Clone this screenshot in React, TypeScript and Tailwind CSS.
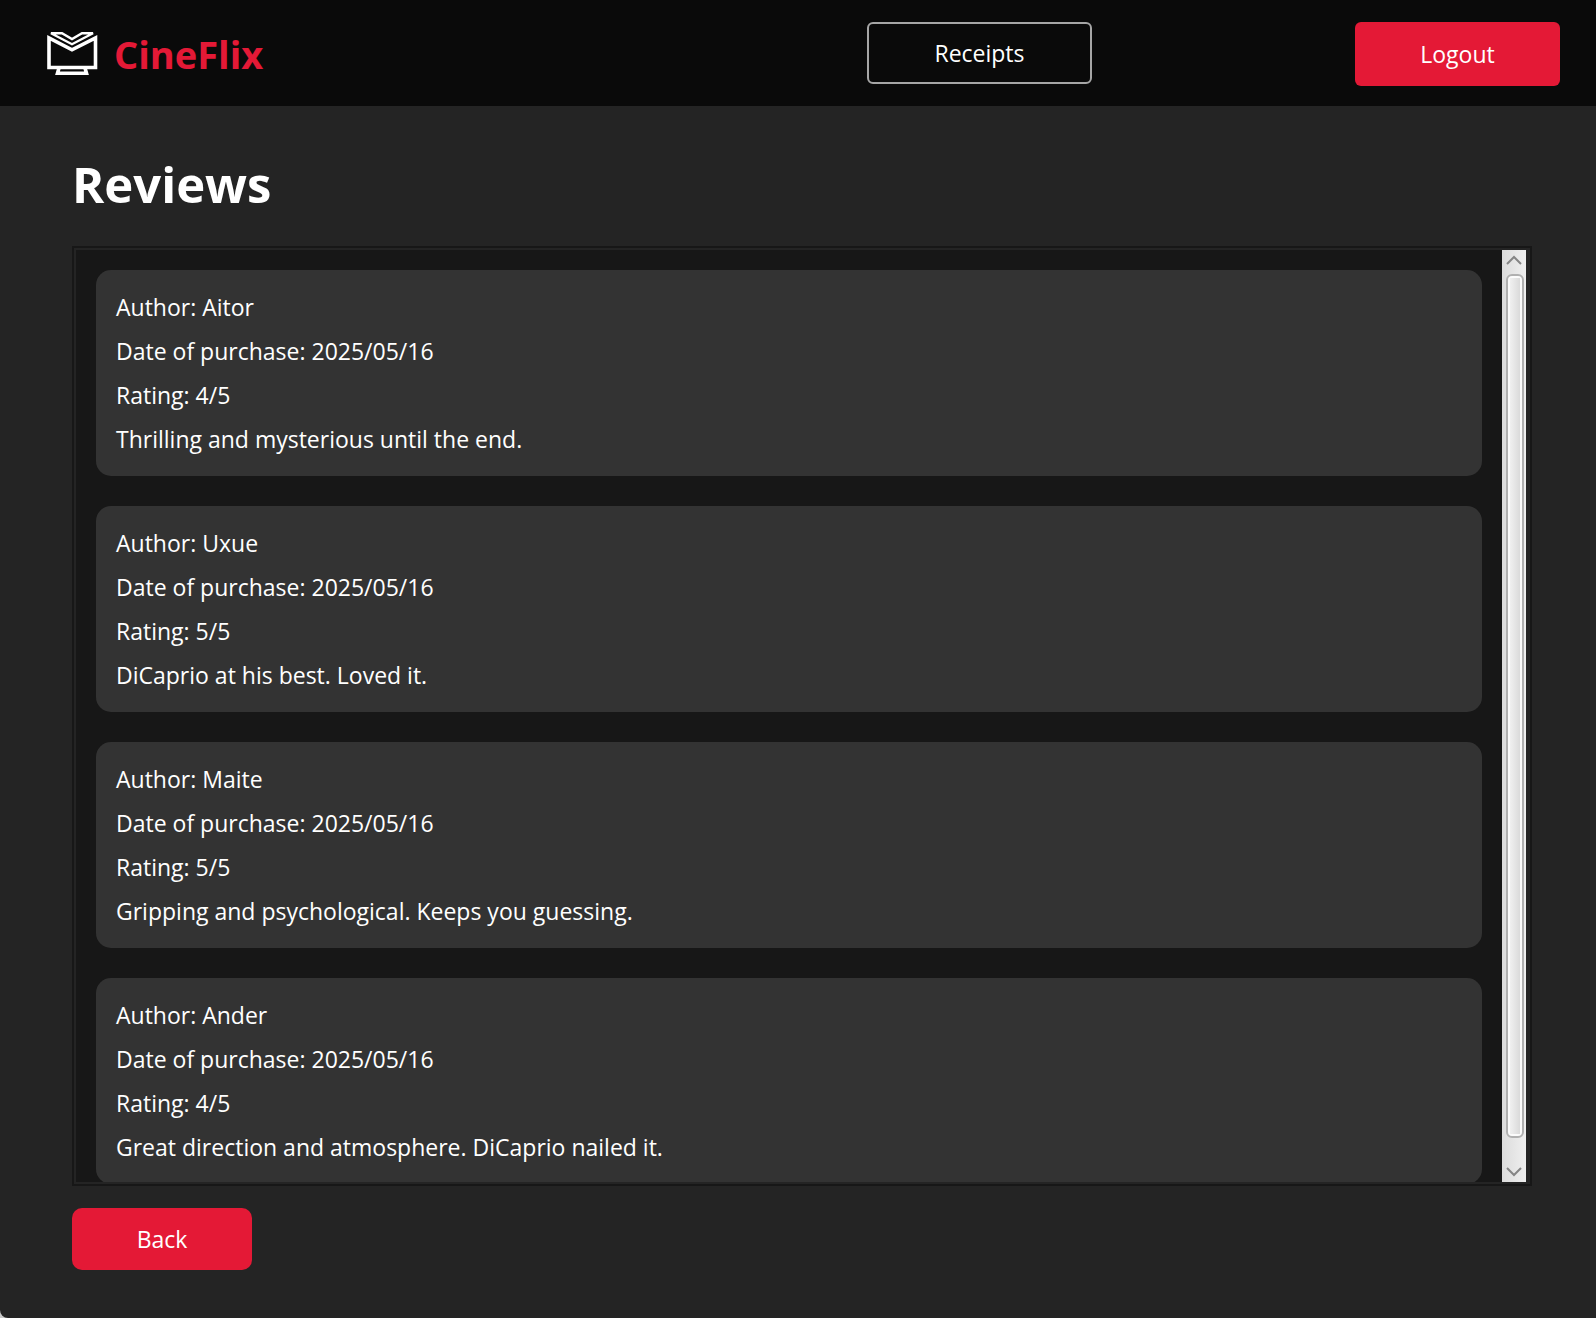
const reviews = [
  { author: "Aitor", date: "2025/05/16", rating: 4, text: "Thrilling and mysterious until the end." },
  { author: "Uxue", date: "2025/05/16", rating: 5, text: "DiCaprio at his best. Loved it." },
  { author: "Maite", date: "2025/05/16", rating: 5, text: "Gripping and psychological. Keeps you guessing." },
  { author: "Ander", date: "2025/05/16", rating: 4, text: "Great direction and atmosphere. DiCaprio nailed it." },
];

function Logo() {
  return (
    <svg width="52" height="44" viewBox="0 0 52 44" fill="none" stroke="white" aria-hidden="true">
      <path d="M3 6V35.5H49.5V6L26 17.8Z" strokeWidth="3.6" />
      <path d="M5 1.2H16L26 7L36 1.2H47L26 12.2Z" strokeWidth="2.4" />
      <path d="M13 36L11.5 41.2H40.5L39 36" strokeWidth="3.6" />
    </svg>
  );
}

function Header() {
  return (
    <header className="flex h-[106px] shrink-0 items-start bg-[#0a0a0a] pt-[22px] pr-9 pl-[46px]">
      <div className="flex h-16 flex-1 items-center gap-4">
        <Logo />
        <span className="text-[38px] font-bold text-[#e41936]">CineFlix</span>
      </div>
      <button className="h-[62px] w-[225px] rounded-md border-2 border-[#a6a6a6]">Receipts</button>
      <div className="flex w-[468px] justify-end">
        <button className="h-16 w-[205px] rounded-md bg-[#e41936]">Logout</button>
      </div>
    </header>
  );
}

function ScrollBar() {
  return (
    <div className="flex w-6 shrink-0 flex-col items-center bg-linear-to-r from-[#dcdcdc] to-[#efefef]" aria-hidden="true">
      <svg width="24" height="24" viewBox="0 0 24 24" fill="none" stroke="#858585" strokeWidth="2">
        <path d="M5 14L12 7L19 14" />
      </svg>
      <div className="ml-[2px] flex w-[18px] flex-1 rounded-md border-2 border-[#b0b0b0] bg-[#fbfbfb] p-[2px]">
        <div className="flex-1 bg-linear-to-r from-[#f0f0f0] to-[#dadada]" />
      </div>
      <svg width="24" height="44" viewBox="0 0 24 44" fill="none" stroke="#858585" strokeWidth="2">
        <path d="M5 30L12 37L19 30" />
      </svg>
    </div>
  );
}

export default function App() {
  return (
    <div className="bg-[#c8c8c8]">
      <div className="flex h-screen flex-col overflow-hidden rounded-bl-lg bg-[#242424] font-['Open_Sans',sans-serif] text-[23px] leading-8 text-white">
        <Header />
        <main className="flex min-h-0 flex-1 flex-col items-start pt-[45px] pr-16 pb-12 pl-[72px]">
          <h1 className="mb-[29px] text-[49px] leading-[66px] font-bold">Reviews</h1>
          <section className="flex min-h-0 w-full flex-1 border-2 border-[#171717]">
            <div className="flex min-w-0 flex-1 border-2 border-r-4 border-[#242424] bg-[#171717]">
              <ul className="flex min-w-0 flex-1 flex-col gap-[30px] overflow-y-auto p-5 [scrollbar-width:none]">
                {reviews.map((r) => (
                  <li key={r.author} className="flex shrink-0 flex-col gap-3 rounded-[15px] bg-[#333333] px-5 py-[21px]">
                    <p>Author: {r.author}</p>
                    <p>Date of purchase: {r.date}</p>
                    <p>Rating: {r.rating}/5</p>
                    <p>{r.text}</p>
                  </li>
                ))}
              </ul>
              <ScrollBar />
            </div>
          </section>
          <button className="mt-[22px] h-[62px] w-[180px] shrink-0 rounded-[10px] bg-[#e41936]">Back</button>
        </main>
      </div>
    </div>
  );
}
